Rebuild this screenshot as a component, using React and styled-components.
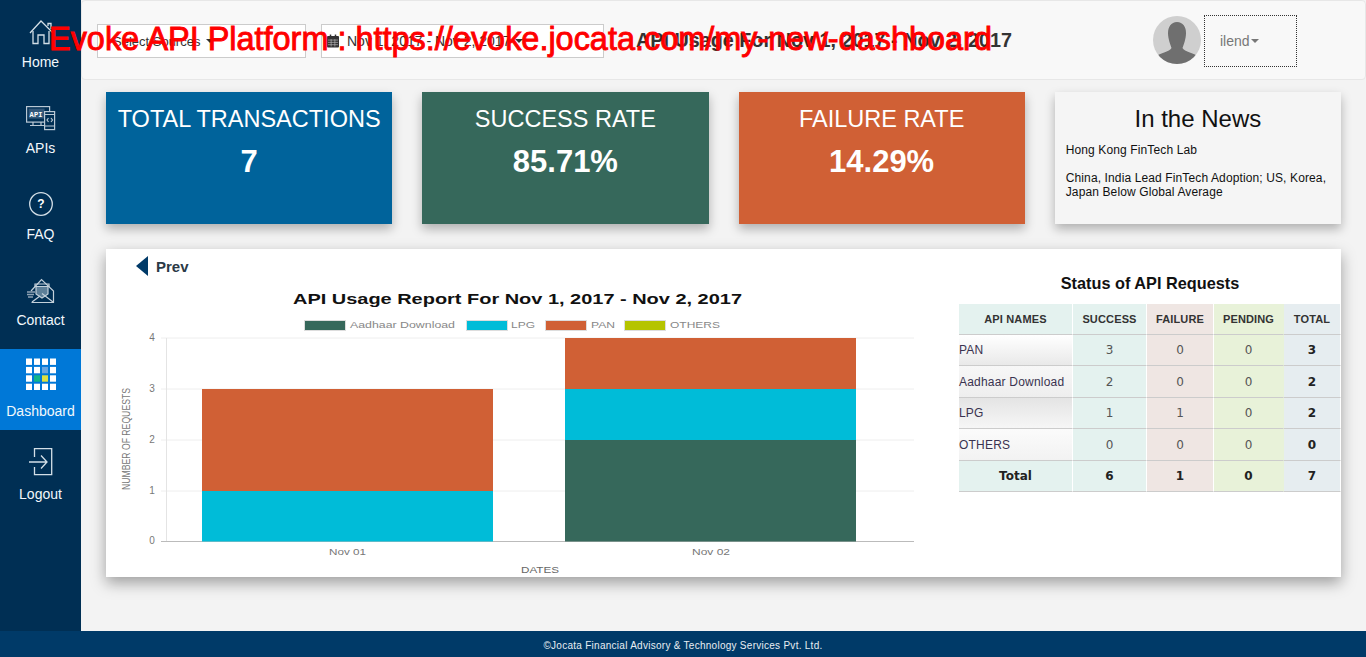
import React from "react";
import styled, { createGlobalStyle } from "styled-components";

const GlobalStyle = createGlobalStyle`
  html, body { margin: 0; padding: 0; height: 100%; overflow: hidden; }
  body { font-family: "Liberation Sans", Arial, sans-serif; color: #333; background: #f3f3f3; }
  * { box-sizing: border-box; }
`;

const Page = styled.div`
  position: relative;
  display: flex;
  flex-direction: column;
  width: 1366px;
  height: 657px;
`;
const Body = styled.div`
  display: flex;
  flex: 1;
  min-height: 0;
`;
const Sidebar = styled.nav`
  display: flex;
  flex-direction: column;
  width: 81px;
  padding-top: 5px;
  background: #002f54;
`;
const NavItem = styled.a`
  display: flex;
  flex-direction: column;
  align-items: center;
  height: ${(p) => p.$height || 86}px;
  padding-top: ${(p) => p.$top || 15}px;
  background: ${(p) => (p.$active ? "#0078d7" : "transparent")};
  color: #f2f8fc;
  font-size: 14px;
  line-height: 20px;
  svg { display: block; flex: none; }
  span { margin-top: ${(p) => p.$gap || 6}px; }
`;
const Main = styled.main`
  flex: 1;
  min-width: 0;
`;
const TopBar = styled.header`
  display: flex;
  align-items: center;
  height: 80px;
  padding-left: 15px;
  background: #f8f8f8;
  border: 1px solid #e7e7e7;
  border-radius: 4px;
`;
const FilterBox = styled.div`
  display: flex;
  align-items: center;
  width: ${(p) => p.$width}px;
  height: 34px;
  margin-top: 2px;
  margin-right: 15px;
  padding-left: ${(p) => p.$pad}px;
  background: #fff;
  border: 1px solid #ccc;
  font-size: ${(p) => p.$size || 14}px;
  color: #333;
  white-space: nowrap;
`;
const Caret = styled.i`
  display: inline-block;
  margin-left: ${(p) => p.$left || 5}px;
  border-top: 4px solid ${(p) => p.$color || "#333"};
  border-left: 4px solid transparent;
  border-right: 4px solid transparent;
`;
const PageTitle = styled.h1`
  width: 517px;
  margin: 0 0 0 17px;
  font-size: 19.8px;
  font-weight: 700;
  color: #333;
  white-space: nowrap;
`;
const UserMenu = styled.div`
  display: flex;
  align-items: center;
  width: 93px;
  height: 52px;
  margin-left: 3px;
  margin-top: 2px;
  padding-left: 15px;
  border: 1px dotted #333;
  color: #777;
  font-size: 14px;
`;
const Content = styled.div`
  padding: 12px 25px 0;
`;
const Cards = styled.section`
  display: grid;
  grid-template-columns: repeat(4, 286.25px);
  column-gap: 30px;
  height: 132px;
`;
const StatCard = styled.div`
  padding-top: 12px;
  background: ${(p) => p.$bg};
  color: #fff;
  text-align: center;
  box-shadow: 0 5px 10px rgba(0, 0, 0, 0.28);
`;
const StatTitle = styled.div`
  font-size: 23.5px;
  line-height: 30px;
`;
const StatValue = styled.div`
  margin-top: 9px;
  font-size: 31px;
  line-height: 38px;
  font-weight: 700;
`;
const NewsCard = styled.div`
  padding: 12px 11px 0;
  background: #f5f5f5;
  color: #111;
  box-shadow: 0 5px 10px rgba(0, 0, 0, 0.28);
`;
const NewsTitle = styled.div`
  font-size: 24px;
  line-height: 30px;
  text-align: center;
  margin-bottom: 9px;
`;
const NewsText = styled.p`
  margin: 0 0 14px;
  font-size: 12px;
  line-height: 14px;
  letter-spacing: 0.12px;
`;
const Panel = styled.section`
  display: flex;
  width: 1235px;
  height: 328px;
  margin-top: 25px;
  background: #fff;
  box-shadow: 0 6px 14px rgba(0, 0, 0, 0.35);
`;
const ChartColumn = styled.div`
  width: 853px;
  flex: none;
`;
const PrevLink = styled.a`
  display: flex;
  align-items: center;
  height: 36px;
  padding-left: 30px;
  padding-bottom: 2px;
  font-size: 15px;
  font-weight: 700;
  color: #2b3a46;
  svg { margin-right: 8px; }
`;
const TableColumn = styled.div`
  flex: 1;
  min-width: 0;
`;
const TableTitle = styled.h3`
  margin: 0;
  padding-top: 24px;
  height: 55px;
  font-size: 16.3px;
  line-height: 20px;
  font-weight: 700;
  text-align: center;
  color: #111;
`;
const StatusTable = styled.table`
  width: 382px;
  table-layout: fixed;
  border-collapse: separate;
  border-spacing: 0;
  font-size: 12px;
`;
const HeadCell = styled.th`
  height: 31px;
  padding: 0;
  background: ${(p) => p.$bg};
  border-right: 1px solid ${(p) => (p.$joined ? p.$bg : "#fff")};
  border-bottom: 1px solid #ccc;
  font-size: 11px;
  letter-spacing: 0.15px;
  font-weight: 700;
  color: #333;
  text-align: center;
`;
const NameCell = styled.td`
  height: ${(p) => p.$height}px;
  padding: 0;
  background: linear-gradient(${(p) => p.$from}, ${(p) => p.$to});
  border-bottom: 1px solid #ccc;
  border-right: 1px solid #fff;
  font-size: 12px;
  letter-spacing: 0.2px;
  color: #3a3350;
`;
const NumCell = styled.td`
  height: ${(p) => p.$height}px;
  padding: 0;
  background: ${(p) => p.$bg};
  border-right: 1px solid ${(p) => (p.$joined ? p.$bg : "#fff")};
  border-bottom: 1px solid #ccc;
  font-family: "DejaVu Sans", sans-serif;
  font-size: 12px;
  font-weight: ${(p) => (p.$strong ? 700 : 400)};
  color: ${(p) => (p.$strong ? "#222" : "#555")};
  text-align: center;
`;
const TotalLabel = styled(NumCell)`
  font-weight: 700;
  color: #222;
`;
const Footer = styled.footer`
  height: 26px;
  flex: none;
  background: #003a68;
  color: #e8eef3;
  font-size: 10px;
  line-height: 29px;
  letter-spacing: 0.27px;
  text-align: center;
`;
const Watermark = styled.div`
  position: absolute;
  left: 49px;
  top: 21px;
  font-size: 32.45px;
  line-height: 37px;
  color: #f00;
  -webkit-text-stroke: 0.9px #f00;
  white-space: nowrap;
`;

const iconStroke = "#d3dfe7";

const HomeIcon = () => (
  <svg width="26" height="26" viewBox="28 20 26 26" fill="none" stroke={iconStroke} strokeWidth="1.3">
    <path d="M30 33 L41 21 L53 33" />
    <path d="M48 26 V23.5 H51 V29" />
    <path d="M33 31 V43.5 H38 V35 H44 V43.5 H49 V31" />
  </svg>
);
const ApiIcon = () => (
  <svg width="30" height="26" viewBox="26 105 30 26" fill="none" stroke="#b9c8d4" strokeWidth="1.2">
    <rect x="26.6" y="106.6" width="23" height="15.5" />
    <rect x="28.6" y="108.6" width="16" height="10" fill="#33587a" stroke="none" />
    <text x="29.5" y="116.6" fontFamily="Liberation Mono, monospace" fontSize="7" fontWeight="700" fill="#fff" stroke="none" textLength="13">API</text>
    <path d="M33 122 V125 M41 122 V125 M30 125.5 H44" />
    <rect x="44.6" y="111.6" width="10" height="18" fill="#002f54" />
    <path d="M45 114.5 H54.5 M45 126 H54.5" />
    <path d="M48.5 118 L47 120 L48.5 122 M51 118 L52.5 120 L51 122" />
  </svg>
);
const FaqIcon = () => (
  <svg width="24" height="24" viewBox="0 0 24 24">
    <circle cx="12" cy="12" r="11.3" fill="none" stroke={iconStroke} strokeWidth="1.3" />
    <text x="12" y="16.300" textAnchor="middle" fontFamily="Liberation Sans, sans-serif" fontSize="12" fontWeight="700" fill="#fff">?</text>
  </svg>
);
const ContactIcon = () => (
  <svg width="28" height="26" viewBox="27 277 28 26" fill="none" stroke="#c3d0da" strokeWidth="1.2">
    <path d="M31 290 L41.5 278.5 L53.5 290 V301.5 H31.5" />
    <path d="M35 286 V283 H49 V286" />
    <path d="M36 285.5 H48 V293 L42 297 L36 293 Z" fill="#5d7f98" stroke="#c3d0da" />
    <path d="M53 301 L42 292.5 M32 301 L40 295" />
    <path d="M27 291 H35 M27 293.5 H34 M28 296 H33" stroke="#8ea3b4" strokeWidth="1.4" />
  </svg>
);

const gridColors = {
  6: "#6aa6e0",
  9: "#10b58a",
  10: "#dde042",
};
const DashboardIcon = () => (
  <svg width="30" height="32" viewBox="0 0 30 32">
    {Array.from({ length: 16 }).map((_, i) => (
      <rect
        key={i}
        x={(i % 4) * 8}
        y={Math.floor(i / 4) * 8.4 + 0.5}
        width="6"
        height="6.4"
        fill={gridColors[i] || "#fff"}
      />
    ))}
  </svg>
);
const LogoutIcon = () => (
  <svg width="24" height="28" viewBox="29 448 24 28" fill="none" stroke={iconStroke} strokeWidth="1.3">
    <path d="M34.5 457 V448.7 H51.7 V474.7 H34.5 V467" />
    <path d="M29 462 H46.5 M41 455.5 L47 462 L41 468.5" />
  </svg>
);
const CalendarIcon = () => (
  <svg width="12" height="14" viewBox="0 0 13 14" style={{ marginRight: 8 }}>
    <rect x="0" y="1.5" width="13" height="12.5" rx="1" fill="#333" />
    <rect x="3" y="0" width="1.6" height="3" fill="#333" />
    <rect x="8.4" y="0" width="1.6" height="3" fill="#333" />
    <path d="M1 6 H12 M1 8.5 H12 M1 11 H12 M4.5 5 V13 M8.5 5 V13" stroke="#bbb" strokeWidth="0.7" />
  </svg>
);
const Avatar = () => (
  <svg width="48" height="48" viewBox="0 0 48 48">
    <defs>
      <clipPath id="avatar-clip">
        <circle cx="24" cy="24" r="24" />
      </clipPath>
    </defs>
    <g clipPath="url(#avatar-clip)">
      <rect width="48" height="48" fill="#cfcfcf" />
      <path
        d="M24 6 C30 6 33 11 33 17 C33 23 30.500 29 29.500 32 C31 36 42 37 46 41 L48 48 H0 L2 41 C6 37 17 36 18.500 32 C17.500 29 15 23 15 17 C15 11 18 6 24 6 Z"
        fill="#6f6f6f"
      />
    </g>
  </svg>
);

const chartFont = "Liberation Sans, Arial, sans-serif";
const series = {
  aadhaar: "#36685b",
  lpg: "#00bcd8",
  pan: "#d06035",
  others: "#b5c400",
};
const gridLines = [
  { label: "4", y: 338 },
  { label: "3", y: 389 },
  { label: "2", y: 440 },
  { label: "1", y: 491 },
  { label: "0", y: 541.5 },
];
const bars = [
  { x: 202, top: 389, bottom: 491, color: series.pan },
  { x: 202, top: 491, bottom: 541.5, color: series.lpg },
  { x: 565, top: 338, bottom: 389, color: series.pan },
  { x: 565, top: 389, bottom: 440, color: series.lpg },
  { x: 565, top: 440, bottom: 541.5, color: series.aadhaar },
];
const legend = [
  { name: "Aadhaar Download", x: 304, tx: 350, tw: 105, color: series.aadhaar },
  { name: "LPG", x: 466, tx: 511, tw: 24, color: series.lpg },
  { name: "PAN", x: 545, tx: 591, tw: 24, color: series.pan },
  { name: "OTHERS", x: 624, tx: 670, tw: 50, color: series.others },
];

const UsageChart = () => (
  <svg width="853" height="292" viewBox="106 285 853 292" style={{ display: "block" }}>
    <text x="293" y="304" fontFamily={chartFont} fontSize="15" fontWeight="700" fill="#111" textLength="449" lengthAdjust="spacingAndGlyphs">
      API Usage Report For Nov 1, 2017 - Nov 2, 2017
    </text>
    {legend.map((l) => (
      <g key={l.name}>
        <rect x={l.x + 0.5} y="320.5" width="41" height="10" fill={l.color} stroke="#ddd" />
        <text x={l.tx} y="328" fontFamily={chartFont} fontSize="9" fill="#888" textLength={l.tw} lengthAdjust="spacingAndGlyphs">
          {l.name}
        </text>
      </g>
    ))}
    {gridLines.map((g) => (
      <g key={g.label}>
        <line x1="161" x2="914" y1={g.y} y2={g.y} stroke={g.label === "0" ? "#bbb" : "#eee"} />
        <text x="152" y={g.y + 2.5} textAnchor="middle" fontFamily={chartFont} fontSize="10" fill="#777">
          {g.label}
        </text>
      </g>
    ))}
    <line x1="166.500" x2="166.500" y1="338" y2="541" stroke="#e4e4e4" />
    {bars.map((b) => (
      <rect key={`${b.x}-${b.top}`} x={b.x} y={b.top} width="291" height={b.bottom - b.top} fill={b.color} />
    ))}
    <text x="329" y="555" fontFamily={chartFont} fontSize="9" fill="#777" textLength="37" lengthAdjust="spacingAndGlyphs">Nov 01</text>
    <text x="692" y="555" fontFamily={chartFont} fontSize="9" fill="#777" textLength="38" lengthAdjust="spacingAndGlyphs">Nov 02</text>
    <text x="521" y="573" fontFamily={chartFont} fontSize="9" fill="#666" textLength="38" lengthAdjust="spacingAndGlyphs">DATES</text>
    <text transform="translate(129.5 439) rotate(-90)" textAnchor="middle" fontFamily={chartFont} fontSize="11" fill="#777" textLength="102" lengthAdjust="spacingAndGlyphs">
      NUMBER OF REQUESTS
    </text>
  </svg>
);

const colBg = {
  success: "#e4f2ef",
  failure: "#efe6e3",
  pending: "#e8f2d9",
  total: "#e6edf0",
};
const rows = [
  { name: "PAN", s: 3, f: 0, p: 0, t: 3, h: 31, from: "#ffffff", to: "#e9e9e9" },
  { name: "Aadhaar Download", s: 2, f: 0, p: 0, t: 2, h: 32, from: "#f7f7f7", to: "#eeeeee" },
  { name: "LPG", s: 1, f: 1, p: 0, t: 2, h: 31, from: "#e4e4e4", to: "#f6f6f6" },
  { name: "OTHERS", s: 0, f: 0, p: 0, t: 0, h: 32, from: "#fbfbfb", to: "#f2f2f2" },
];

function App() {
  return (
    <Page>
      <GlobalStyle />
      <Body>
        <Sidebar>
          <NavItem><HomeIcon /><span>Home</span></NavItem>
          <NavItem $top={14} $gap={7}><ApiIcon /><span>APIs</span></NavItem>
          <NavItem $gap={8}><FaqIcon /><span>FAQ</span></NavItem>
          <NavItem><ContactIcon /><span>Contact</span></NavItem>
          <NavItem $active $height={81} $top={9} $gap={11}><DashboardIcon /><span>Dashboard</span></NavItem>
          <NavItem $top={18} $gap={8}><LogoutIcon /><span>Logout</span></NavItem>
        </Sidebar>
        <Main>
          <TopBar>
            <FilterBox $width={209} $pad={15} $size={13}>Select Sources<Caret $left={6} /></FilterBox>
            <FilterBox $width={283} $pad={5}>
              <CalendarIcon />Nov 1, 2017 - Nov 2, 2017<Caret />
            </FilterBox>
            <PageTitle>API Usage For Nov 1, 2017 - Nov 2, 2017</PageTitle>
            <Avatar />
            <UserMenu>ilend<Caret $left={1} $color="#777" /></UserMenu>
          </TopBar>
          <Content>
            <Cards>
              <StatCard $bg="#00639b">
                <StatTitle>TOTAL TRANSACTIONS</StatTitle>
                <StatValue>7</StatValue>
              </StatCard>
              <StatCard $bg="#36685b">
                <StatTitle>SUCCESS RATE</StatTitle>
                <StatValue>85.71%</StatValue>
              </StatCard>
              <StatCard $bg="#d06035">
                <StatTitle>FAILURE RATE</StatTitle>
                <StatValue>14.29%</StatValue>
              </StatCard>
              <NewsCard>
                <NewsTitle>In the News</NewsTitle>
                <NewsText>Hong Kong FinTech Lab</NewsText>
                <NewsText>China, India Lead FinTech Adoption; US, Korea, Japan Below Global Average</NewsText>
              </NewsCard>
            </Cards>
            <Panel>
              <ChartColumn>
                <PrevLink>
                  <svg width="12" height="20" viewBox="0 0 12 20">
                    <path d="M12 0 V20 L0 10 Z" fill="#003a68" />
                  </svg>
                  Prev
                </PrevLink>
                <UsageChart />
              </ChartColumn>
              <TableColumn>
                <TableTitle>Status of API Requests</TableTitle>
                <StatusTable>
                  <colgroup>
                    <col width="114" />
                    <col width="74" />
                    <col width="67" />
                    <col width="70" />
                    <col width="57" />
                  </colgroup>
                  <thead>
                    <tr>
                      <HeadCell $bg="#e4f2ef">API NAMES</HeadCell>
                      <HeadCell $bg={colBg.success}>SUCCESS</HeadCell>
                      <HeadCell $bg={colBg.failure}>FAILURE</HeadCell>
                      <HeadCell $bg={colBg.pending} $joined>PENDING</HeadCell>
                      <HeadCell $bg={colBg.total}>TOTAL</HeadCell>
                    </tr>
                  </thead>
                  <tbody>
                    {rows.map((r) => (
                      <tr key={r.name}>
                        <NameCell $height={r.h} $from={r.from} $to={r.to}>{r.name}</NameCell>
                        <NumCell $height={r.h} $bg={colBg.success}>{r.s}</NumCell>
                        <NumCell $height={r.h} $bg={colBg.failure}>{r.f}</NumCell>
                        <NumCell $height={r.h} $bg={colBg.pending} $joined>{r.p}</NumCell>
                        <NumCell $height={r.h} $bg={colBg.total} $strong>{r.t}</NumCell>
                      </tr>
                    ))}
                    <tr>
                      <TotalLabel $height={31} $bg="#e4f2ef">Total</TotalLabel>
                      <NumCell $height={31} $bg={colBg.success} $strong>6</NumCell>
                      <NumCell $height={31} $bg={colBg.failure} $strong>1</NumCell>
                      <NumCell $height={31} $bg={colBg.pending} $strong $joined>0</NumCell>
                      <NumCell $height={31} $bg={colBg.total} $strong>7</NumCell>
                    </tr>
                  </tbody>
                </StatusTable>
              </TableColumn>
            </Panel>
          </Content>
        </Main>
      </Body>
      <Footer>©Jocata Financial Advisory &amp; Technology Services Pvt. Ltd.</Footer>
      <Watermark>Evoke API Platform : https://evoke.jocata.com/my-new-dashboard</Watermark>
    </Page>
  );
}

export default App;
